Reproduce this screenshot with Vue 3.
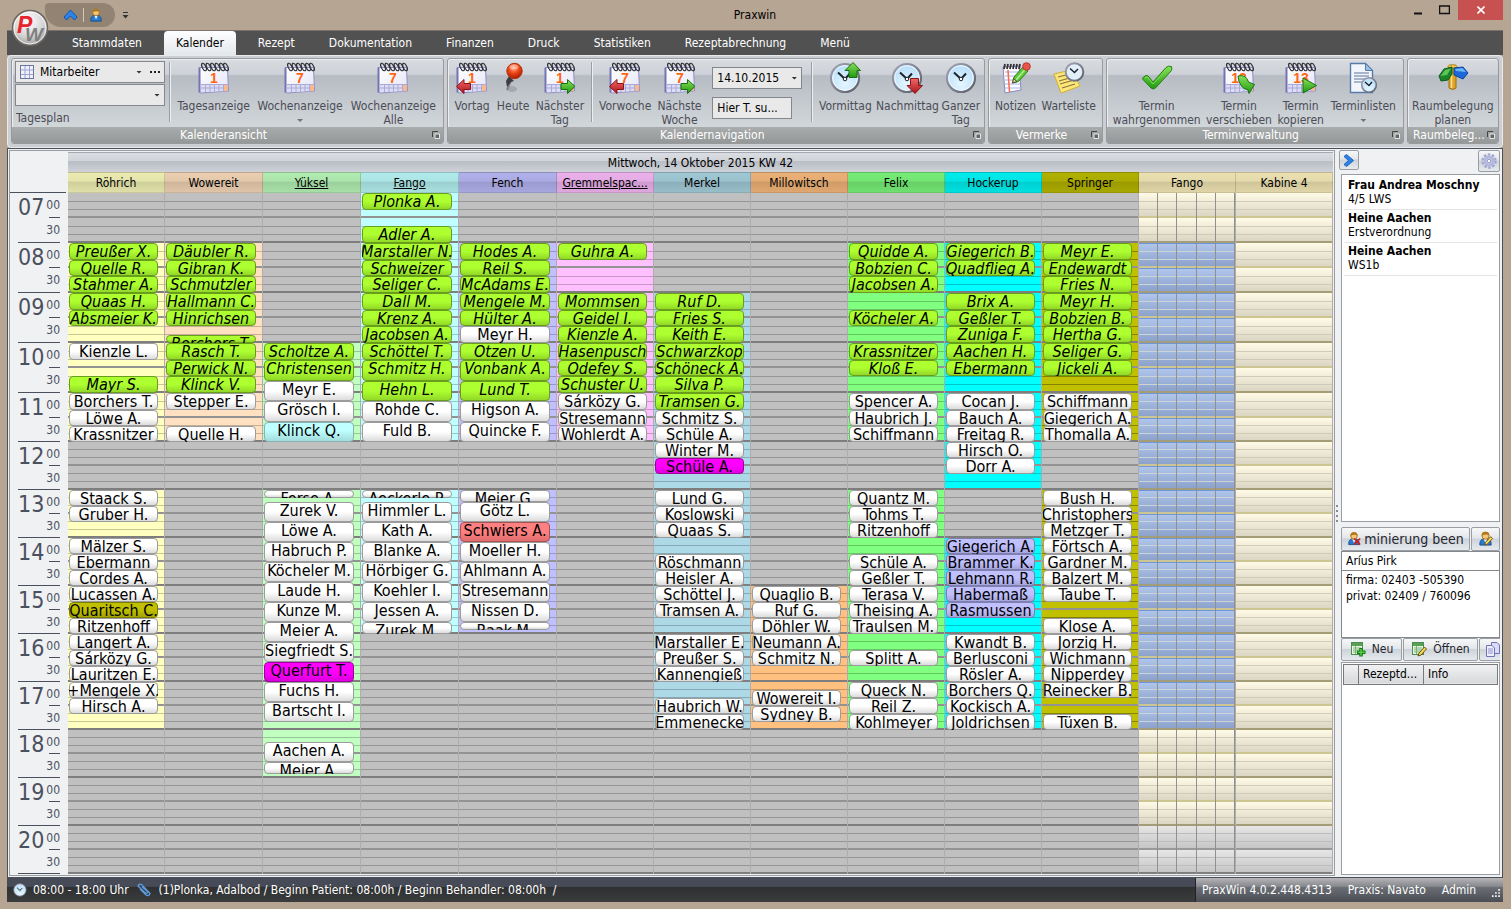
<template>
  <div class="window">
    <svg class="defs" aria-hidden="true">
      <defs>
        <linearGradient id="gPage" x1="0" y1="0" x2="1" y2="1">
          <stop offset="0" stop-color="#ffffff" /><stop offset="1" stop-color="#e4e4f8" />
        </linearGradient>
        <linearGradient id="gGreen" x1="0" y1="0" x2="0" y2="1">
          <stop offset="0" stop-color="#8be05a" /><stop offset="1" stop-color="#1f9a10" />
        </linearGradient>
        <linearGradient id="gRed" x1="0" y1="0" x2="0" y2="1">
          <stop offset="0" stop-color="#ee6a6a" /><stop offset="1" stop-color="#b01218" />
        </linearGradient>
        <radialGradient id="gFace" cx="0.5" cy="0.7" r="0.7">
          <stop offset="0" stop-color="#e6f6ff" /><stop offset="1" stop-color="#b4dcfa" />
        </radialGradient>
        <radialGradient id="gBall" cx="0.45" cy="0.3" r="0.7">
          <stop offset="0" stop-color="#ffb08a" /><stop offset="0.5" stop-color="#ee4416" /><stop offset="1" stop-color="#a81c00" />
        </radialGradient>
        <linearGradient id="gRim" x1="0" y1="0" x2="1" y2="1">
          <stop offset="0" stop-color="#a4a4b8" /><stop offset="1" stop-color="#5c6068" />
        </linearGradient>
        <radialGradient id="gOrb" cx="0.45" cy="0.3" r="0.8">
          <stop offset="0" stop-color="#ffffff" /><stop offset="0.55" stop-color="#d4d4d4" /><stop offset="1" stop-color="#8c8c8c" />
        </radialGradient>
      </defs>
      <symbol id="calendar" viewBox="0 0 32 32">
        <path d="M1.500 5.500H29.500L30.500 29L3 31L1.500 30Z" fill="url(#gPage)" stroke="#8f8fc4" />
        <path d="M1.500 5.500V30.500" stroke="#7474b4" stroke-width="2" />
        <path d="M3 22.500H30V29L3 30Z" fill="#dcdcf4" />
        <path d="M3 22.500H30M3 26H30M7.500 22V30M12 22V30M16.500 22V30M21 22V30M25.500 22V30" stroke="#aaaad8" fill="none" />
        <rect x="26" y="23" width="4" height="6" fill="#f8b890" />
        <g fill="none" stroke="#33333b" stroke-width="1.200">
          <ellipse cx="6" cy="5" rx="1.800" ry="4" transform="rotate(-25 6 5)" />
          <ellipse cx="10.500" cy="5" rx="1.800" ry="4" transform="rotate(-25 10.500 5)" />
          <ellipse cx="15" cy="5" rx="1.800" ry="4" transform="rotate(-25 15 5)" />
          <ellipse cx="19.500" cy="5" rx="1.800" ry="4" transform="rotate(-25 19.500 5)" />
          <ellipse cx="24" cy="5" rx="1.800" ry="4" transform="rotate(-25 24 5)" />
          <ellipse cx="28" cy="5" rx="1.800" ry="4" transform="rotate(-25 28 5)" />
        </g>
      </symbol>
      <symbol id="clock" viewBox="0 0 32 32">
        <circle cx="16" cy="16" r="14" fill="url(#gFace)" stroke="url(#gRim)" stroke-width="2.200" />
        <circle cx="16" cy="16" r="12.300" fill="none" stroke="#ffffff" stroke-opacity="0.8" />
        <path d="M9 10.500L16 17L21 11.500" fill="none" stroke="#1c242c" stroke-width="2" />
        <circle cx="16" cy="17" r="1.800" fill="#fff" stroke="#1c242c" />
      </symbol>
      <symbol id="pin" viewBox="0 0 32 32">
        <ellipse cx="15" cy="27" rx="5" ry="3" fill="#8a8f98" opacity="0.5" />
        <path d="M15 16L10 28" stroke="#7d8088" stroke-width="2" />
        <path d="M12 14L17 19L14 20L10 25L9 19Z" fill="#3c3c42" />
        <circle cx="17.500" cy="9" r="7.700" fill="url(#gBall)" stroke="#b03410" />
        <ellipse cx="17" cy="5" rx="4.500" ry="2.500" fill="#fff" opacity="0.35" />
      </symbol>
      <symbol id="notes" viewBox="0 0 32 32">
        <path d="M3 5L19 4L21 28L5 31Z" fill="#fdfdff" stroke="#8888c0" />
        <path d="M5 10H19M5 14H19M5 18H20M5 22H20M5 26H20" stroke="#a8b4e4" />
        <path d="M8 8L9.500 30" stroke="#ff6848" stroke-width="1.500" />
        <path d="M4 7L5 2M7 7L8 2M10 7L11 2M13 7L14 2M16 7L17 2M19 7L20 2" stroke="#303036" stroke-width="1.800" />
        <path d="M12.500 21L14 15L23 5L28 9L18.500 19.500Z" fill="#5cc83a" stroke="#2c7c1c" />
        <path d="M16 18L25.500 7" stroke="#b4f088" stroke-width="1.500" />
        <path d="M12.500 21L13.500 16.500L17 19.500Z" fill="#f4d8a0" stroke="#4a5030" />
        <circle cx="26.500" cy="4.500" r="3.800" fill="#e85448" stroke="#b83430" />
      </symbol>
      <symbol id="waiting" viewBox="0 0 32 32">
        <path d="M1 12L18 8L27 24L8 31Z" fill="#fbe67c" stroke="#d0b030" />
        <path d="M5 15L17 12M6 19L20 15M7 22L21 18M9 26L22 22" stroke="#8c7430" stroke-width="1.200" />
        <circle cx="21.500" cy="10" r="8.800" fill="#e2effa" stroke="url(#gRim)" stroke-width="2" />
        <path d="M17 6.500L21.500 10.500L25 7" fill="none" stroke="#1c242c" stroke-width="1.500" />
      </symbol>
      <symbol id="check" viewBox="0 0 32 32">
        <path d="M1.500 17Q1.500 15 5 13.500Q6.500 13 8 15L12 20L25 5.500Q27 3.500 30.500 4.500Q31 7 30.500 8.500L14.500 26Q12 28 10 26Z" fill="url(#gGreen)" stroke="#1c8412" stroke-linejoin="round" />
        <path d="M4 16L6.500 15L12 22L27 6" fill="none" stroke="#7cdc54" />
      </symbol>
      <symbol id="document" viewBox="0 0 32 32">
        <path d="M3.500 1.500H18.500L25.500 8.500V30.500H3.500Z" fill="#f2f6fc" stroke="#587ca8" stroke-width="1.400" />
        <path d="M18.500 1.500V8.500H25.500Z" fill="#9cc0ec" stroke="#587ca8" />
        <path d="M7 11H22M7 14H22M7 17H18M7 20H15" stroke="#a8b4cc" stroke-width="2" />
        <circle cx="22" cy="23" r="7.300" fill="url(#gFace)" stroke="url(#gRim)" stroke-width="1.600" />
        <path d="M18 20L22 23.500L25 20" fill="none" stroke="#1c242c" stroke-width="1.500" />
      </symbol>
      <symbol id="signpost" viewBox="0 0 32 32">
        <path d="M12 4H19V26Q16 29 12 26Z" fill="#dca428" stroke="#9c6c10" />
        <path d="M14.500 5V26" stroke="#ffe488" stroke-width="1.500" />
        <ellipse cx="15.500" cy="4.500" rx="4.500" ry="1.800" fill="#f4cc50" stroke="#a87c18" />
        <path d="M2 14L7 7L15 5V12L11 18L4 19Z" fill="#1c8428" stroke="#0c5c18" />
        <path d="M3.500 14L8 8L14 6.500L10 13Z" fill="#5cc458" />
        <path d="M17 6L26 5L31 11L26 17L17 13Z" fill="#1c68d8" stroke="#0c449c" />
        <path d="M18 7L25.500 6L29 10L19 9Z" fill="#6cb4fc" />
      </symbol>
      <symbol id="leftRed" viewBox="0 0 32 32">
        <path d="M0.500 24.500L8 17.500V21.500H14.500V27.500H8V31.500Z" fill="url(#gRed)" stroke="#8c1414" stroke-linejoin="round" />
      </symbol>
      <symbol id="rightGreen" viewBox="0 0 32 32">
        <path d="M31 24.500L23.500 17.500V21.500H17V27.500H23.500V31.500Z" fill="url(#gGreen)" stroke="#187010" stroke-linejoin="round" />
      </symbol>
      <symbol id="upGreen" viewBox="0 0 32 32">
        <path d="M24 0.500L31.500 8.500H28V15.500H20V8.500H16Z" fill="url(#gGreen)" stroke="#187010" stroke-linejoin="round" />
      </symbol>
      <symbol id="downRed" viewBox="0 0 32 32">
        <path d="M24 31.500L31.500 23.500H27.500V16.500H19.500V23.500H16Z" fill="url(#gRed)" stroke="#8c1414" stroke-linejoin="round" />
      </symbol>
      <symbol id="moveGreen" viewBox="0 0 32 32">
        <path d="M15 14Q23 12 25.500 20L31.500 22.500L26 31.500L25 28Q16 26 15 14Z" fill="url(#gGreen)" stroke="#187010" stroke-linejoin="round" />
      </symbol>
      <symbol id="playGreen" viewBox="0 0 32 32">
        <path d="M18 16L31.500 23.500L18 31Z" fill="url(#gGreen)" stroke="#187010" stroke-linejoin="round" />
      </symbol>
      <symbol id="person" viewBox="0 0 16 16">
        <path d="M2 15Q1.500 9 6 8.500H10Q14.500 9 14 15Z" fill="#2878d0" stroke="#14508c" />
        <path d="M6 8.500L8 13L10 8.500Z" fill="#f4f4f4" />
        <circle cx="8" cy="5" r="3.800" fill="#f4c478" stroke="#a87420" />
        <path d="M4 5Q3.500 1 8 0.800Q12.500 1 12 5Q9 2.500 4 5Z" fill="#b07818" />
      </symbol>
      <symbol id="pencil" viewBox="0 0 16 16">
        <path d="M7 15L8 12L13.500 6L15.500 8L10 14Z" fill="#f8d850" stroke="#685018" />
      </symbol>
      <symbol id="sheet" viewBox="0 0 16 16">
        <rect x="1.500" y="1.500" width="11" height="12" fill="#e8f4e0" stroke="#4c8c50" />
        <rect x="2" y="2" width="10" height="3" fill="#58a058" />
        <path d="M3 7H11M3 9H11M3 11H11M5.500 5V13" stroke="#78b478" />
      </symbol>
    </svg>

    <header class="titlebar">
      <div class="quick">
        <button type="button" aria-label="Menüband minimieren">
          <svg width="15" height="12" viewBox="0 0 15 12"><path d="M1 8L7.500 1L14 8L11.500 11L7.500 7L3.500 11Z" fill="#2d84e8" stroke="#1454a8" /></svg>
        </button>
        <span class="quick-sep"></span>
        <button type="button" aria-label="Benutzer">
          <svg width="14" height="14"><use href="#person" /></svg>
        </button>
      </div>
      <svg class="quick-more" width="7" height="7" viewBox="0 0 7 7"><path d="M1 0.500H6" stroke="#333" /><path d="M0.500 3H6.500L3.500 6.500Z" fill="#333" /></svg>
      <h1>Praxwin</h1>
      <div class="winbuttons">
        <button type="button" aria-label="Minimieren"><svg width="10" height="10"><path d="M1 8.500H9" stroke="#111" stroke-width="2" /></svg></button>
        <button type="button" aria-label="Maximieren"><svg width="11" height="10"><path d="M0.500 1H10.500V8.500H0.500Z" fill="none" stroke="#111" stroke-width="1.500" /></svg></button>
        <button type="button" class="close" aria-label="Schließen"><svg width="8" height="8"><path d="M0.500 0.500L7.500 7.500M7.500 0.500L0.500 7.500" stroke="#fff" stroke-width="1.600" /></svg></button>
      </div>
      <button type="button" class="orb" aria-label="Anwendung">
        <svg width="38" height="38" viewBox="0 0 38 38">
          <circle cx="19" cy="19" r="17.500" fill="url(#gOrb)" stroke="#6c6660" stroke-width="1.500" />
          <circle cx="19" cy="19" r="16" fill="none" stroke="#fff" stroke-opacity="0.8" />
          <text x="14" y="32" class="orb-w">W</text>
          <text x="6" y="24" class="orb-p">P</text>
        </svg>
      </button>
    </header>

    <nav class="tabs">
      <a v-for="tab in tabs" :key="tab" href="#" :class="{ active: tab === 'Kalender' }">{{ tab }}</a>
    </nav>

    <div class="ribbon">
      <section v-for="group in ribbon" :key="group.title" class="group" :style="{ flexGrow: group.share }">
        <div class="group-body">
          <template v-for="(item, i) in group.items" :key="i">
            <div v-if="item.type === 'plan'" class="plan">
              <div class="combo">
                <svg width="14" height="14" viewBox="0 0 14 14"><rect x="0.500" y="0.500" width="13" height="13" fill="#eef0fc" stroke="#70749c" /><path d="M1 5H13M1 9.500H13M5 1V13M9.500 1V13" stroke="#a0a4d0" /></svg>
                <select aria-label="Ansicht"><option>Mitarbeiter</option></select>
                <i class="caret"></i>
                <button type="button" aria-label="Mehr" class="dots"><i></i><i></i><i></i></button>
              </div>
              <div class="combo">
                <select id="tagesplan"><option></option></select>
                <i class="caret"></i>
              </div>
              <label for="tagesplan">Tagesplan</label>
            </div>
            <span v-else-if="item.type === 'sep'" class="sep"></span>
            <div v-else-if="item.type === 'search'" class="search">
              <div class="combo">
                <select aria-label="Datum"><option>14.10.2015</option></select>
                <i class="caret"></i>
              </div>
              <input type="text" value="Hier T. su..." aria-label="Termin suchen">
            </div>
            <button v-else type="button" class="tool" :style="{ flexBasis: item.width + 'px' }">
              <svg width="32" height="32" viewBox="0 0 32 32">
                <use :href="'#' + item.icon" />
                <text v-if="item.num" x="16" y="21" text-anchor="middle" class="cal-num">{{ item.num }}</text>
                <use v-if="item.badge" :href="'#' + item.badge" />
              </svg>
              <span v-for="line in item.lines" :key="line">{{ line }}</span>
              <i v-if="item.drop" class="caret"></i>
            </button>
          </template>
        </div>
        <footer>
          <span>{{ group.title }}</span>
          <svg width="8" height="8" viewBox="0 0 8 8"><path d="M0.500 6V0.500H6" fill="none" stroke="#444" /><path d="M3 3H7.500V7.500H3Z" fill="#666" stroke="#fff" stroke-width="0.800" /></svg>
        </footer>
      </section>
    </div>

    <main class="main">
      <section class="scheduler">
        <div class="ruler">
          <div class="ruler-head"></div>
          <div v-for="hour in hours" :key="hour" class="hour">
            <span class="hh">{{ pad(hour) }}</span>
            <div class="mm">
              <span v-for="(m, i) in ['00', '30']" :key="m" :class="{ short: isShort(hour, i) }">{{ m }}</span>
            </div>
          </div>
        </div>
        <div class="board">
          <h2>Mittwoch, 14 Oktober 2015 KW 42</h2>
          <div class="columns">
            <div v-for="(col, c) in columns" :key="c" class="column" :class="[col.tone, { room: col.room, split: col.split }]">
              <h3 :class="{ linked: col.linked }"><span>{{ col.name }}</span></h3>
              <div class="lane">
                <template v-for="hour in hours" :key="hour">
                  <div
                    v-for="i in [0, 1]"
                    :key="i"
                    class="half"
                    :class="{ open: isOpen(col, hour), short: isShort(hour, i), night: hour >= 20, full: i === 1 }"
                  ></div>
                </template>
                <div
                  v-for="a in col.appointments"
                  :key="a.start"
                  class="appointment"
                  :class="a.kind"
                  :style="{ top: offset(a.start) + 'px', height: offset(a.start + a.length) - offset(a.start) + 'px' }"
                >{{ a.name }}</div>
              </div>
            </div>
          </div>
        </div>
      </section>

      <div class="splitter"><i></i><i></i><i></i><i></i></div>

      <aside class="side">
        <div class="side-top">
          <button type="button" aria-label="Einklappen"><svg width="12" height="13" viewBox="0 0 12 13"><path d="M1 2.500L3.500 0.500L10.500 6.500L3.500 12.500L1 10.500L5.500 6.500Z" fill="#2d84e8" stroke="#1c60b8" /></svg></button>
          <button type="button" aria-label="Einstellungen"><svg width="16" height="16" viewBox="0 0 16 16"><circle cx="8" cy="8" r="6.500" fill="none" stroke="#a4a8d0" stroke-width="2.500" stroke-dasharray="2.600 1.480" /><circle cx="8" cy="8" r="4.200" fill="#d4d6f0" stroke="#b4b8dc" stroke-width="3" /><circle cx="8" cy="8" r="1.800" fill="#fff" stroke="#9094bc" /></svg></button>
        </div>
        <ul class="patients">
          <li v-for="(p, i) in patients" :key="i"><b>{{ p.name }}</b><span>{{ p.note }}</span></li>
        </ul>
        <div class="side-actions">
          <button type="button" class="end">
            <svg width="14" height="15" viewBox="0 0 16 16"><use href="#person" /><path d="M8 8L15 15M15 8L8 15" stroke="#d02020" stroke-width="2" /></svg>
            <span>minierung been</span>
          </button>
          <button type="button" class="edit" aria-label="Bearbeiten"><svg width="15" height="15" viewBox="0 0 16 16"><use href="#person" /><use href="#pencil" /></svg></button>
        </div>
        <input class="patient" type="text" value="Aríus Pirk" aria-label="Patient">
        <div class="phones"><p>firma: 02403 -505390</p><p>privat: 02409 / 760096</p></div>
        <div class="side-actions docs">
          <button type="button"><svg width="16" height="16" viewBox="0 0 16 16"><use href="#sheet" /><path d="M11 7V15.500M7 11.300H15.500" stroke="#187818" stroke-width="3.500" /><path d="M11 8V14.500M8 11.300H14.500" stroke="#50d040" stroke-width="1.500" /></svg>Neu</button>
          <button type="button"><svg width="16" height="16" viewBox="0 0 16 16"><use href="#sheet" /><use href="#pencil" /></svg>Öffnen</button>
          <button type="button" aria-label="Kopieren"><svg width="14" height="15" viewBox="0 0 14 15"><path d="M5.500 0.500H11L13.500 3V11.500H5.500Z" fill="#d8dcf8" stroke="#7074b4" /><path d="M0.500 3.500H6L8.500 6V14.500H0.500Z" fill="#eceefe" stroke="#7074b4" /><path d="M2 7H7M2 9H7M2 11H7" stroke="#9094c8" /></svg></button>
        </div>
        <div class="recipes">
          <table>
            <thead><tr><th class="mark"></th><th class="date">Rezeptd...</th><th>Info</th></tr></thead>
          </table>
        </div>
      </aside>
    </main>

    <footer class="status">
      <svg width="14" height="14" viewBox="0 0 32 32"><use href="#clock" /></svg>
      <span class="range">08:00 - 18:00 Uhr</span>
      <svg width="14" height="14" viewBox="0 0 14 14"><path d="M3 6L9 12Q12 13.500 13 10.500L5 2Q2 0 1 3L9 10.500Q11 10.500 10 8L5 4" fill="none" stroke="#5c9cdc" stroke-width="1.300" /></svg>
      <span class="info">(1)Plonka, Adalbod / Beginn Patient: 08:00h / Beginn Behandler: 08:00h&nbsp; /</span>
      <div class="status-right">
        <span>PraxWin 4.0.2.448.4313</span>
        <span>Praxis: Navato</span>
        <span>Admin</span>
        <svg width="10" height="10" viewBox="0 0 10 10"><path d="M8 0H10V2H8ZM4 4H6V6H4ZM8 4H10V6H8ZM0 8H2V10H0ZM4 8H6V10H4ZM8 8H10V10H8Z" fill="#fff" /></svg>
      </div>
    </footer>
  </div>
</template>

<script setup>
const tabs = ['Stammdaten', 'Kalender', 'Rezept', 'Dokumentation', 'Finanzen', 'Druck', 'Statistiken', 'Rezeptabrechnung', 'Menü']

const ribbon = [
  {
    title: 'Kalenderansicht',
    share: 434,
    items: [
      { type: 'plan' },
      { type: 'sep' },
      { icon: 'calendar', num: '1', lines: ['Tagesanzeige'], width: 80 },
      { icon: 'calendar', num: '7', lines: ['Wochenanzeige'], drop: true, width: 94 },
      { icon: 'calendar', num: '7', lines: ['Wochenanzeige', 'Alle'], width: 94 }
    ]
  },
  {
    title: 'Kalendernavigation',
    share: 540,
    items: [
      { icon: 'calendar', num: '1', badge: 'leftRed', lines: ['Vortag'], width: 44 },
      { icon: 'pin', lines: ['Heute'], width: 42 },
      { icon: 'calendar', num: '1', badge: 'rightGreen', lines: ['Nächster', 'Tag'], width: 56 },
      { type: 'sep' },
      { icon: 'calendar', num: '7', badge: 'leftRed', lines: ['Vorwoche'], width: 62 },
      { icon: 'calendar', num: '7', badge: 'rightGreen', lines: ['Nächste', 'Woche'], width: 52 },
      { type: 'search' },
      { type: 'sep' },
      { icon: 'clock', badge: 'upGreen', lines: ['Vormittag'], width: 61 },
      { icon: 'clock', badge: 'downRed', lines: ['Nachmittag'], width: 69 },
      { icon: 'clock', lines: ['Ganzer', 'Tag'], width: 43 }
    ]
  },
  {
    title: 'Vermerke',
    share: 113,
    items: [
      { icon: 'notes', lines: ['Notizen'], width: 48 },
      { icon: 'waiting', lines: ['Warteliste'], width: 62 }
    ]
  },
  {
    title: 'Terminverwaltung',
    share: 298,
    items: [
      { icon: 'check', lines: ['Termin', 'wahrgenommen'], width: 96 },
      { icon: 'calendar', num: '13', badge: 'moveGreen', lines: ['Termin', 'verschieben'], width: 72 },
      { icon: 'calendar', num: '13', badge: 'playGreen', lines: ['Termin', 'kopieren'], width: 54 },
      { icon: 'document', lines: ['Terminlisten'], drop: true, width: 74 }
    ]
  },
  {
    title: 'Raumbeleg...',
    share: 91,
    items: [{ icon: 'signpost', lines: ['Raumbelegung', 'planen'], width: 90 }]
  }
]

const hours = [7, 8, 9, 10, 11, 12, 13, 14, 15, 16, 17, 18, 19, 20]
const dayStart = 7 * 60
const shortFrom = 11 * 60 + 30

const pad = n => String(n).padStart(2, '0')
const isShort = (hour, half) => hour * 60 + half * 30 >= shortFrom
const isOpen = (col, hour) => col.open.some(([from, to]) => hour >= from && hour < to)

// half hours are 25px high until 11:30 and 24px after that
function offset(minute) {
  const tall = Math.min(minute, shortFrom) - dayStart
  const short = Math.max(minute - shortFrom, 0)
  return Math.round((tall * 25) / 30 + (short * 24) / 30)
}

// consecutive appointments of the same length
function run(from, length, kind, ...names) {
  const [h, m] = from.split(':').map(Number)
  return names.map((name, i) => ({ name, kind, length, start: h * 60 + m + i * length }))
}

const columns = [
  {
    name: 'Röhrich', tone: 'yellow', open: [[8, 12], [13, 18]],
    appointments: [
      ...run('8:00', 20, 'done', 'Preußer X.', 'Quelle R.', 'Stahmer A.', 'Quaas H.', 'Absmeier K.'),
      ...run('10:00', 20, '', 'Kienzle L.'),
      ...run('10:40', 20, 'done', 'Mayr S.'),
      ...run('11:00', 20, '', 'Borchers T.', 'Löwe A.', 'Krassnitzer'),
      ...run('13:00', 20, '', 'Staack S.', 'Gruber H.'),
      ...run('14:00', 20, '', 'Mälzer S.', 'Ebermann', 'Cordes A.', 'Lucassen A.'),
      ...run('15:20', 20, 'dark', 'Quaritsch C.'),
      ...run('15:40', 20, '', 'Ritzenhoff', 'Langert A.', 'Sárközy G.', 'Lauritzen E.', '+Mengele X.', 'Hirsch A.')
    ]
  },
  {
    name: 'Wowereit', tone: 'peach', open: [[8, 12]],
    appointments: [
      ...run('8:00', 20, 'done', 'Däubler R.', 'Gibran K.', 'Schmutzler', 'Hallmann C.', 'Hinrichsen'),
      ...run('9:50', 10, 'done', 'Borchers T.'),
      ...run('10:00', 20, 'done', 'Rasch T.', 'Perwick N.', 'Klinck V.'),
      ...run('11:00', 20, '', 'Stepper E.'),
      ...run('11:40', 20, '', 'Quelle H.')
    ]
  },
  {
    name: 'Yüksel', tone: 'mint', linked: true, open: [[10, 12], [13, 19]],
    appointments: [
      ...run('10:00', 20, 'done', 'Scholtze A.'),
      ...run('10:20', 25, 'done', 'Christensen'),
      ...run('10:45', 25, '', 'Meyr E.', 'Grösch I.'),
      ...run('11:35', 25, 'aqua', 'Klinck Q.'),
      ...run('13:00', 10, '', 'Ferse A.'),
      ...run('13:15', 25, '', 'Zurek V.', 'Löwe A.', 'Habruch P.', 'Köcheler M.', 'Laude H.', 'Kunze M.', 'Meier A.', 'Siegfriedt S.'),
      ...run('16:35', 25, 'pink', 'Querfurt T.'),
      ...run('17:00', 25, '', 'Fuchs H.', 'Bartscht I.'),
      ...run('18:15', 25, '', 'Aachen A.'),
      ...run('18:40', 15, '', 'Meier A.')
    ]
  },
  {
    name: 'Fango', tone: 'sky', linked: true, open: [[7, 12], [13, 16]],
    appointments: [
      ...run('7:00', 20, 'done', 'Plonka A.'),
      ...run('7:40', 20, 'done', 'Adler A.', 'Marstaller N.', 'Schweizer', 'Seliger C.', 'Dall M.', 'Krenz A.', 'Jacobsen A.', 'Schöttel T.'),
      ...run('10:20', 25, 'done', 'Schmitz H.', 'Hehn L.'),
      ...run('11:10', 25, '', 'Rohde C.', 'Fuld B.'),
      ...run('13:00', 10, '', 'Aeckerle P.'),
      ...run('13:15', 25, '', 'Himmler L.', 'Kath A.', 'Blanke A.', 'Hörbiger G.', 'Koehler I.', 'Jessen A.'),
      ...run('15:45', 15, '', 'Zurek M.')
    ]
  },
  {
    name: 'Fench', tone: 'lilac', open: [[8, 12], [13, 16]],
    appointments: [
      ...run('8:00', 20, 'done', 'Hodes A.', 'Reil S.', 'McAdams E.', 'Mengele M.', 'Hülter A.'),
      ...run('9:40', 20, '', 'Meyr H.'),
      ...run('10:00', 20, 'done', 'Otzen U.'),
      ...run('10:20', 25, 'done', 'Vonbank A.', 'Lund T.'),
      ...run('11:10', 25, '', 'Higson A.', 'Quincke F.'),
      ...run('13:00', 15, '', 'Meier G.'),
      ...run('13:15', 25, '', 'Götz L.'),
      ...run('13:40', 25, 'red', 'Schwiers A.'),
      ...run('14:05', 25, '', 'Moeller H.', 'Ahlmann A.', 'Stresemann', 'Nissen D.'),
      ...run('15:45', 10, '', 'Raak M.')
    ]
  },
  {
    name: 'Gremmelspac...', tone: 'rose', linked: true, open: [[8, 12]],
    appointments: [
      ...run('8:00', 20, 'done', 'Guhra A.'),
      ...run('9:00', 20, 'done', 'Mommsen', 'Geidel I.', 'Kienzle A.', 'Hasenpusch', 'Odefey S.', 'Schuster U.'),
      ...run('11:00', 20, '', 'Sárközy G.', 'Stresemann', 'Wohlerdt A.')
    ]
  },
  {
    name: 'Merkel', tone: 'steel', open: [[9, 18]],
    appointments: [
      ...run('9:00', 20, 'done', 'Ruf D.', 'Fries S.', 'Keith E.', 'Schwarzkop', 'Schöneck A.', 'Silva P.', 'Tramsen G.'),
      ...run('11:20', 20, '', 'Schmitz S.', 'Schüle A.', 'Winter M.'),
      ...run('12:20', 20, 'pink', 'Schüle A.'),
      ...run('13:00', 20, '', 'Lund G.', 'Koslowski', 'Quaas S.'),
      ...run('14:20', 20, '', 'Röschmann', 'Heisler A.', 'Schöttel J.', 'Tramsen A.'),
      ...run('16:00', 20, '', 'Marstaller E.', 'Preußer S.', 'Kannengieß'),
      ...run('17:20', 20, '', 'Haubrich W.', 'Emmenecke')
    ]
  },
  {
    name: 'Millowitsch', tone: 'orange', open: [[15, 18]],
    appointments: [
      ...run('15:00', 20, '', 'Quaglio B.', 'Ruf G.', 'Döhler W.', 'Neumann A.', 'Schmitz N.'),
      ...run('17:10', 20, '', 'Wowereit I.', 'Sydney B.')
    ]
  },
  {
    name: 'Felix', tone: 'green', open: [[8, 12], [13, 18]],
    appointments: [
      ...run('8:00', 20, 'done', 'Quidde A.', 'Bobzien C.', 'Jacobsen A.'),
      ...run('9:20', 20, 'done', 'Köcheler A.'),
      ...run('10:00', 20, 'done', 'Krassnitzer', 'Kloß E.'),
      ...run('11:00', 20, '', 'Spencer A.', 'Haubrich J.', 'Schiffmann'),
      ...run('13:00', 20, '', 'Quantz M.', 'Tohms T.', 'Ritzenhoff'),
      ...run('14:20', 20, '', 'Schüle A.', 'Geßler T.', 'Terasa V.', 'Theising A.', 'Traulsen M.'),
      ...run('16:20', 20, '', 'Splitt A.'),
      ...run('17:00', 20, '', 'Queck N.', 'Reil Z.', 'Kohlmeyer')
    ]
  },
  {
    name: 'Hockerup', tone: 'cyan', open: [[8, 13], [14, 18]],
    appointments: [
      ...run('8:00', 20, 'done', 'Giegerich B.', 'Quadflieg A.'),
      ...run('9:00', 20, 'done', 'Brix A.', 'Geßler T.', 'Zuniga F.', 'Aachen H.', 'Ebermann'),
      ...run('11:00', 20, '', 'Cocan J.', 'Bauch A.', 'Freitag R.', 'Hirsch O.', 'Dorr A.'),
      ...run('14:00', 20, 'violet', 'Giegerich A.', 'Brammer K.', 'Lehmann R.', 'Habermaß', 'Rasmussen'),
      ...run('16:00', 20, '', 'Kwandt B.', 'Berlusconi', 'Rösler A.', 'Borchers Q.', 'Kockisch A.', 'Joldrichsen')
    ]
  },
  {
    name: 'Springer', tone: 'olive', open: [[8, 12], [13, 18]],
    appointments: [
      ...run('8:00', 20, 'done', 'Meyr E.', 'Endewardt', 'Fries N.', 'Meyr H.', 'Bobzien B.', 'Hertha G.', 'Seliger G.', 'Jickeli A.'),
      ...run('11:00', 20, '', 'Schiffmann', 'Giegerich A.', 'Thomalla A.'),
      ...run('13:00', 20, '', 'Bush H.', 'Christophers', 'Metzger T.', 'Förtsch A.', 'Gardner M.', 'Balzert M.', 'Taube T.'),
      ...run('15:40', 20, '', 'Klose A.', 'Jorzig H.', 'Wichmann', 'Nipperdey', 'Reinecker B.'),
      ...run('17:40', 20, '', 'Tüxen B.')
    ]
  },
  { name: 'Fango', tone: 'sand', room: true, split: true, open: [[8, 18]], appointments: [] },
  { name: 'Kabine 4', tone: 'sand', room: true, open: [], appointments: [] }
]

const patients = [
  { name: 'Frau Andrea Moschny', note: '4/5 LWS' },
  { name: 'Heine Aachen', note: 'Erstverordnung' },
  { name: 'Heine Aachen', note: 'WS1b' }
]
</script>

<style>
body {
  margin: 0;
  background: #b5a592;
}
</style>

<style scoped>
* {
  box-sizing: border-box;
}

.window {
  min-height: 100vh;
  padding: 0 8px 7px 7px;
  display: flex;
  flex-direction: column;
  font: 12px/14px "DejaVu Sans Condensed", "DejaVu Sans", sans-serif;
  color: #000;
  background: #b5a592;
}

.defs {
  position: absolute;
  width: 0;
  height: 0;
}

button,
input,
select {
  font: inherit;
  color: inherit;
  margin: 0;
  padding: 0;
  border: 0;
  background: none;
}

select {
  appearance: none;
  flex: 1;
  min-width: 0;
}

h1,
h2,
h3,
p,
ul {
  margin: 0;
  padding: 0;
  font-size: 12px;
  font-weight: normal;
  list-style: none;
}

.caret {
  width: 6px;
  height: 3px;
  flex: none;
  background: #333;
  clip-path: polygon(0 0, 100% 0, 50% 100%);
}

/* title bar */
.titlebar {
  position: relative;
  height: 30px;
  display: flex;
  align-items: center;
}

.quick {
  width: 70px;
  height: 24px;
  margin-left: 38px;
  padding-left: 18px;
  display: flex;
  align-items: center;
  gap: 5px;
  background: #938373;
  border-radius: 4px 12px 12px 16px;
}

.quick button {
  display: flex;
}

.quick-sep {
  width: 1px;
  height: 14px;
  background: #d0c8be;
}

.quick-more {
  margin-left: 7px;
}

h1 {
  position: absolute;
  left: 0;
  right: 0;
  text-align: center;
  pointer-events: none;
}

.winbuttons {
  margin-left: auto;
  align-self: flex-start;
  display: flex;
}

.winbuttons button {
  width: 27px;
  height: 20px;
  display: flex;
  align-items: center;
  justify-content: center;
}

.winbuttons .close {
  width: 45px;
  background: #c75050;
}

.orb {
  position: absolute;
  left: 4px;
  top: 9px;
  z-index: 2;
  display: flex;
}

.orb-p,
.orb-w {
  font: italic bold 23px "Liberation Sans", sans-serif;
  fill: #e8242c;
}

.orb-w {
  font-size: 19px;
  fill: #808080;
}

/* tabs */
.tabs {
  height: 25px;
  padding-left: 48px;
  display: flex;
  background: #515151;
  border-top: 1px solid #7c7368;
}

.tabs a {
  height: 24px;
  margin: 0 5px;
  padding: 0 12px;
  color: #fff;
  line-height: 24px;
  text-decoration: none;
}

.tabs a.active {
  color: #000;
  background: linear-gradient(#fff, #e3e7ec);
  border-radius: 4px 4px 0 0;
}

/* ribbon */
.ribbon {
  height: 93px;
  padding: 2px 3px 3px;
  display: flex;
  gap: 3px;
  background: #cbcfd4;
  border: 1px solid #e8eaec;
  border-radius: 4px;
}

.group {
  flex: 1 1 0;
  min-width: 0;
  display: flex;
  flex-direction: column;
  border: 1px solid #989a9c;
  border-radius: 3px;
  overflow: hidden;
  background: linear-gradient(#d8dbdf, #ced2d8 18%, #b7bcc4 20%, #d9dfe0);
  box-shadow: inset 1px 1px #eceef0;
}

.group-body {
  flex: 1;
  min-height: 0;
  padding: 2px 3px 0;
  display: flex;
  justify-content: center;
  align-items: flex-start;
}

.group footer {
  height: 16px;
  flex: none;
  padding: 0 3px;
  display: flex;
  align-items: center;
  color: #fff;
  background: linear-gradient(#a9acac, #959898);
}

.group footer span {
  flex: 1;
  text-align: center;
  white-space: nowrap;
}

.tool {
  flex: 0 1 auto;
  display: flex;
  flex-direction: column;
  align-items: center;
  color: #4c4c56;
  white-space: nowrap;
}

.tool svg {
  margin: 1px 0 5px;
}

.tool .caret {
  margin-top: 6px;
  background: #70747a;
}

.cal-num {
  font: bold 14px "Liberation Sans", sans-serif;
  fill: #ff6410;
}

.sep {
  width: 1px;
  height: 60px;
  margin: 1px 4px;
  background: #9a9da2;
  box-shadow: 1px 0 #eceef0;
}

.plan {
  width: 150px;
  flex: none;
}

.plan label {
  display: block;
  margin: 5px 1px 0;
  color: #4c4c56;
}

.combo {
  height: 22px;
  padding: 0 4px;
  display: flex;
  align-items: center;
  background: #e9e9e9;
  border: 1px solid #84878c;
}

.plan .combo + .combo {
  margin-top: 1px;
}

.plan .combo svg + select {
  margin-left: 6px;
}

.dots {
  margin-left: 8px;
  display: flex;
  gap: 2px;
}

.dots i {
  width: 2px;
  height: 2px;
  background: #222;
}

.search {
  width: 90px;
  margin: 6px 5px 0 8px;
  flex: none;
}

.search input {
  width: 80px;
  height: 22px;
  margin-top: 8px;
  padding: 0 4px;
  background: #e9e9e9;
  border: 1px solid #84878c;
}

/* main */
.main {
  flex: 1;
  padding: 1px;
  display: flex;
  background: #f0f1f3;
  border: 1px solid #4a4f5c;
}

.scheduler {
  flex: 1;
  min-width: 0;
  padding: 1px 1px 1px 0;
  display: flex;
  border: 1px solid #9a9da0;
}

.ruler {
  width: 58px;
  flex: none;
  color: #4b505e;
}

.ruler-head {
  height: 41px;
  margin-right: 2px;
  border-bottom: 1px solid #4b505e;
}

.hour {
  margin: 0 8px;
  display: flex;
  border-bottom: 1px solid #4b505e;
}

.hh {
  flex: 1;
  font-size: 23px;
  line-height: 28px;
}

.mm {
  width: 15px;
}

.mm span {
  height: 25px;
  display: block;
  line-height: 24px;
  text-align: right;
}

.mm span.short {
  height: 24px;
}

.mm span:first-child {
  margin-left: 4px;
  border-bottom: 1px solid #4b505e;
  direction: rtl;
}

.mm span:last-child {
  margin-bottom: -1px;
}

.board {
  flex: 1;
  min-width: 0;
}

h2 {
  height: 20px;
  line-height: 20px;
  text-align: center;
  background: linear-gradient(#dadde1, #d0d4d8 42%, #b9bdc5 45%, #cfd2d8);
  border-top: 1px solid #a4a8b0;
}

.columns {
  display: grid;
  grid-template-columns: 97fr repeat(4, 98fr) repeat(8, 97fr);
}

.column {
  min-width: 0;
  --open: #c0c0c0;
  --head: #ebe0b0;
}

.yellow { --open: #ffffc0; --head: #ebebb0; }
.peach { --open: #ffe0c0; --head: #ebceb0; }
.mint { --open: #c0ffc0; --head: #b0ebb0; }
.sky { --open: #c0ffff; --head: #b0ebeb; }
.lilac { --open: #c0c0ff; --head: #b0b0eb; }
.rose { --open: #ffc0ff; --head: #ebb0eb; }
.steel { --open: #add8e6; --head: #9fc7d4; }
.orange { --open: #ffc080; --head: #ebb076; }
.green { --open: #80ff80; --head: #76eb76; }
.cyan { --open: #00ffff; --head: #00ebeb; }
.olive { --open: #c0c000; --head: #b0b000; }

h3 {
  height: 21px;
  line-height: 20px;
  text-align: center;
  white-space: nowrap;
  overflow: hidden;
  background: linear-gradient(rgba(0, 0, 0, 0), rgba(0, 0, 0, 0.03) 44%, rgba(0, 0, 0, 0.12) 46%, rgba(0, 0, 0, 0.05)) var(--head);
  border: 1px solid rgba(0, 0, 0, 0.14);
  border-left: 0;
}

.linked span {
  text-decoration: underline;
}

.lane {
  position: relative;
  border-right: 1px solid #adadad;
}

.half {
  --first: 8px;
  --second: 16px;
  --line: rgba(0, 0, 0, 0.22);
  height: 25px;
  background-color: #c0c0c0;
  background-image: linear-gradient(var(--line), var(--line)), linear-gradient(var(--line), var(--line));
  background-size: 100% 1px;
  background-position: 0 var(--first), 0 var(--second);
  background-repeat: no-repeat;
  border-bottom: 2px solid #939393;
}

.half.short {
  --first: 7px;
  --second: 15px;
  height: 24px;
}

.half.full {
  border-bottom-color: #7e7e7e;
}

.half.open {
  background-color: var(--open);
}

.olive .half.open {
  --line: rgba(0, 0, 0, 0.32);
}

.room .half {
  --line: #cfcbb8;
  background-image: linear-gradient(var(--line), var(--line)), linear-gradient(var(--line), var(--line)), linear-gradient(#fffae6, #dad6c3);
  background-size: 100% 1px, 100% 1px, 100% 100%;
  background-position: 0 var(--first), 0 var(--second), 0 0;
  border-bottom-color: #cdc592;
}

.room .half.full {
  border-bottom-color: #a59c78;
}

.room .half.open {
  --line: #ced4d6;
  background-image: linear-gradient(var(--line), var(--line)), linear-gradient(var(--line), var(--line)), linear-gradient(#6f95da 1px, #b0c5ea 1px, #8ca2cc);
}

.room .half.night {
  --line: #bcbcbc;
  background-image: linear-gradient(var(--line), var(--line)), linear-gradient(var(--line), var(--line)), linear-gradient(#e6e6e6, #c6c6c6);
  border-bottom-color: #999;
}

.room .half.night.full {
  border-bottom-color: #7e7e7e;
}

.split .lane::after {
  content: "";
  position: absolute;
  inset: 0;
  background: repeating-linear-gradient(90deg, transparent 0 calc(20% - 1px), #90908c calc(20% - 1px) 20%);
}

.appointment {
  position: absolute;
  left: 1px;
  right: 6px;
  display: flex;
  justify-content: center;
  overflow: clip;
  overflow-clip-margin: 1px;
  font-size: 16px;
  line-height: 16px;
  white-space: nowrap;
  background: linear-gradient(#fff 50%, #dcdcdc);
  border: 1px solid #9c9c9c;
  border-radius: 4px;
}

.appointment.done {
  font-style: italic;
  background: linear-gradient(#adff2f 50%, #92d828);
  border-color: #699e1c;
}

.appointment.dark {
  background: linear-gradient(#c0c000 50%, #a4a400);
  border-color: #7c7c00;
}

.appointment.aqua {
  background: linear-gradient(#c0ffff 40%, #a0dcdc);
  border-color: #88b4b4;
}

.appointment.pink {
  background: linear-gradient(#ff00ff 50%, #dc00dc);
  border-color: #a000a0;
}

.appointment.red {
  background: linear-gradient(#ff8080 50%, #e06c6c);
  border-color: #a85454;
}

.appointment.violet {
  background: linear-gradient(#c0c0ff 50%, #a4a4dc);
  border-color: #8080b0;
}

.splitter {
  width: 4px;
  flex: none;
  display: flex;
  flex-direction: column;
  align-items: center;
  justify-content: center;
  gap: 3px;
}

.splitter i {
  width: 2px;
  height: 2px;
  background: #8c8c8c;
}

/* side panel */
.side {
  width: 162px;
  flex: none;
  padding: 0 1px 1px 2px;
  display: flex;
  flex-direction: column;
}

.side button {
  display: flex;
  align-items: center;
  justify-content: center;
  color: #26262e;
  background: linear-gradient(#f6f7f8, #e4e7ea 45%, #cdd3da 50%, #e6eaee);
  border: 1px solid #9a9da2;
  border-radius: 2px;
}

.side-top {
  height: 24px;
  display: flex;
  justify-content: space-between;
  align-items: flex-start;
}

.side-top button {
  width: 20px;
  height: 20px;
  margin-left: -2px;
}

.side-top button:last-child {
  width: 22px;
  height: 22px;
}

.patients {
  flex: 348 1 0;
  padding: 2px;
  background: #fff;
  border: 1px solid #9a9da2;
  margin-bottom: 5px;
}

.patients li {
  height: 33px;
  padding: 1px 4px 0;
  border-bottom: 1px solid #e4e4e4;
  white-space: nowrap;
}

.patients b,
.patients span {
  display: block;
}

.side-actions {
  height: 24px;
  display: flex;
  gap: 1px;
  overflow: hidden;
}

.end {
  flex: 1;
  min-width: 0;
  gap: 3px;
  font-size: 14px;
  line-height: 20px;
  white-space: nowrap;
  overflow: hidden;
}

.end svg {
  flex: none;
}

.edit {
  width: 29px;
}

.patient {
  height: 20px;
  padding: 0 4px;
  background: #fff;
  border: 1px solid #84878c;
}

.phones {
  height: 67px;
  padding: 1px 4px;
  line-height: 16px;
  background: #fff;
  border: 1px solid #84878c;
  border-top: 0;
}

.docs {
  height: 23px;
}

.docs button {
  flex: none;
  width: 61px;
  gap: 6px;
}

.docs button:nth-child(2) {
  width: 75px;
}

.docs button:last-child {
  width: 28px;
}

.recipes {
  flex: 213 1 0;
  margin-top: 1px;
  padding: 1px;
  background: #fff;
  border: 1px solid #9a9da2;
}

table {
  width: 100%;
  table-layout: fixed;
  border-collapse: collapse;
}

th {
  height: 20px;
  padding: 0 4px;
  font-weight: normal;
  text-align: left;
  white-space: nowrap;
  background: linear-gradient(#f2f2f3, #d6d8da);
  border: 1px solid #77797c;
}

.mark {
  width: 15px;
}

.date {
  width: 65px;
}

/* status bar */
.status {
  height: 24px;
  padding-left: 6px;
  display: flex;
  align-items: center;
  color: #fff;
  background: linear-gradient(#474b57 35%, #2f3031 38%, #3b3c3e);
  white-space: nowrap;
}

.range {
  margin: 0 8px 0 6px;
}

.info {
  margin-left: 8px;
}

.status-right {
  width: 308px;
  height: 24px;
  margin-left: auto;
  padding: 0 3px 0 6px;
  display: flex;
  align-items: center;
  background: linear-gradient(#b8b5b8, #85888c 35%, #6a6e74 40%, #4a4e54);
  border-left: 1px solid #222;
}

.status-right span {
  margin-right: 16px;
}

.status-right svg {
  margin: 6px 0 0 auto;
}
</style>
